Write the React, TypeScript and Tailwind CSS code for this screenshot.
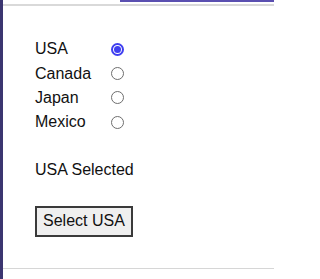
import React, { useState } from 'react';

const countries = ['USA', 'Canada', 'Japan', 'Mexico'];

function Radio({ checked }: { checked: boolean }) {
    if (checked) {
        return (
            <span className="flex h-[13px] w-[13px] items-center justify-center rounded-full border-[2px] border-[#3f3ff0] bg-white">
                <span className="h-[7px] w-[7px] rounded-full bg-[#3f3ff0]" />
            </span>
        );
    }
    return <span className="block h-[13px] w-[13px] rounded-full border border-[#6e6e6e] bg-white" />;
}

export default function App() {
    const [selected, setSelected] = useState('USA');

    return (
        <div className="flex h-[279px] w-[274px] bg-white text-[16px] text-[#111] font-['Liberation_Sans',Arial,sans-serif]">
            <div className="w-[3px] bg-[#3b3570]" />
            <div className="flex flex-1 flex-col">
                <div className="h-[4px]">
                    <div className="ml-[117px] h-[2px] bg-[#5a4fb0]" />
                </div>
                <div className="h-[2px] bg-[#d9d9d9]" />

                <div className="flex flex-1 flex-col pl-[32px] pt-[31px]">
                    <div className="flex flex-col">
                        {countries.map((c) => (
                            <label
                                key={c}
                                className="flex h-[24.4px] cursor-pointer items-center"
                                onClick={() => setSelected(c)}
                            >
                                <span className="w-[76px] leading-[18px]">{c}</span>
                                <Radio checked={selected === c} />
                            </label>
                        ))}
                    </div>

                    <div className="mt-[26px] leading-[18px]">{selected} Selected</div>

                    <div className="mt-[27px]">
                        <button
                            onClick={() => setSelected('USA')}
                            className="h-[31px] border-2 border-[#3a3a3a] bg-[#efefef] px-[6px] leading-[18px]"
                        >
                            Select USA
                        </button>
                    </div>
                </div>

                <div className="h-px bg-[#d6d6d6]" />
                <div className="h-[10px]" />
            </div>
        </div>
    );
}
